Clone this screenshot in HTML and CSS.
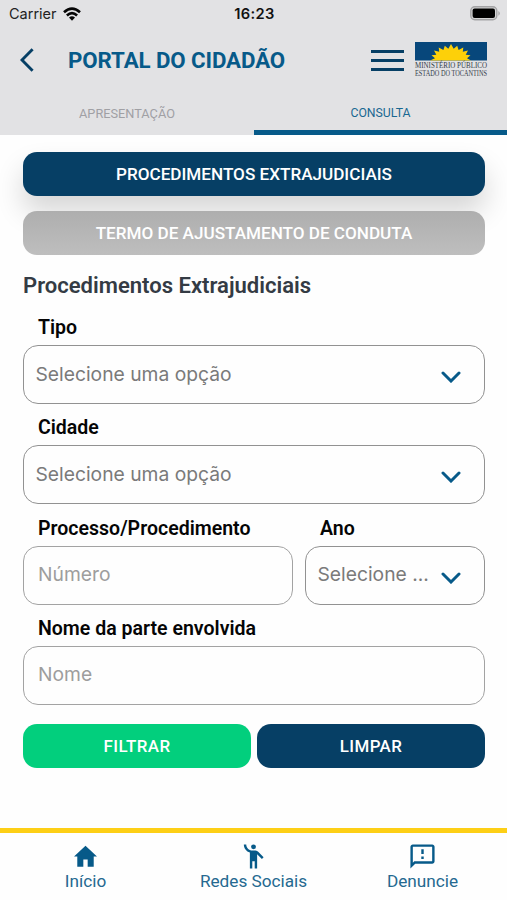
FILE: index.html
```html
<!DOCTYPE html>
<html lang="pt-BR">
<head>
<meta charset="utf-8">
<title>Portal do Cidadão</title>
<link rel="stylesheet" href="styles.css">
</head>
<body>
<header class="header">
  <div class="status">
    <div class="status-left">
      <span>Carrier</span>
      <svg class="wifi" viewBox="0 0 18 14"><g fill="none" stroke="#050505" stroke-width="2.7"><path d="M1 5.2Q9-1.8 17 5.2"/><path d="M3.9 8.4Q9 3.9 14.1 8.4"/></g><path d="M6 10.500Q9 8 12 10.500L9 13.700z" fill="#050505"/></svg>
    </div>
    <span class="clock">16:23</span>
    <svg class="battery" viewBox="0 0 30 15"><rect x=".8" y=".8" width="26" height="13" rx="4" fill="#d4d4d5" stroke="#a3a3a5" stroke-width="1.4"/><rect x="2.6" y="2.6" width="22.4" height="9.4" rx="2" fill="#000"/><path d="M28.4 5v4.8q1.4-.9 1.4-2.4T28.4 5z" fill="#a3a3a5"/></svg>
  </div>
  <div class="nav">
    <svg class="back" viewBox="0 0 14 24"><path d="M12.6 1.3 2 12l10.600 10.700" fill="none" stroke="#063f65" stroke-width="2.900"/></svg>
    <h1 class="title">PORTAL DO CIDADÃO</h1>
    <div class="burger"><i></i><i></i><i></i></div>
    <svg class="logo" viewBox="0 0 76 38">
      <rect x="1" y="0" width="72" height="18.500" fill="#07477b"/>
      <path d="M16 18.500l5-2.300-3.500-3 4.800-.4-2.300-4.300 5.200 1.300-.5-4.300 4.700 2.500 1.400-4.200 3.500 3L37 2l2.700 4.800 3.500-3 1.400 4.200 4.700-2.500-.5 4.300 5.200-1.300-2.300 4.300 4.800.4-3.500 3 4 2.300z" fill="#fdd009"/>
      <g class="logo-text"><text x="1" y="26.300" textLength="72" lengthAdjust="spacingAndGlyphs">MINISTÉRIO PÚBLICO</text><text x="1" y="33.800" textLength="72" lengthAdjust="spacingAndGlyphs">ESTADO DO TOCANTINS</text></g>
    </svg>
  </div>
  <nav class="tabs">
    <div class="tab">APRESENTAÇÃO</div>
    <div class="tab tab-active">CONSULTA</div>
  </nav>
</header>
<main class="main">
  <div class="modes">
    <button class="button navy raised">PROCEDIMENTOS EXTRAJUDICIAIS</button>
    <button class="button muted">TERMO DE AJUSTAMENTO DE CONDUTA</button>
  </div>
  <h2 class="heading">Procedimentos Extrajudiciais</h2>
  <div class="group"><label class="label">Tipo</label>
    <div class="field select"><span>Selecione uma opção</span><svg class="chev" viewBox="0 0 20 12"><path d="M2 2l8 8 8-8"/></svg></div></div>
  <div class="group"><label class="label">Cidade</label>
    <div class="field select"><span>Selecione uma opção</span><svg class="chev" viewBox="0 0 20 12"><path d="M2 2l8 8 8-8"/></svg></div></div>
  <div class="row">
    <div class="group"><label class="label">Processo/Procedimento</label><div class="field light"><span>Número</span></div></div>
    <div class="group"><label class="label">Ano</label>
      <div class="field select"><span>Selecione ...</span><svg class="chev" viewBox="0 0 20 12"><path d="M2 2l8 8 8-8"/></svg></div></div>
  </div>
  <div class="group"><label class="label">Nome da parte envolvida</label><div class="field light"><span>Nome</span></div></div>
  <div class="actions">
    <button class="button green">FILTRAR</button>
    <button class="button navy">LIMPAR</button>
  </div>
</main>
<footer class="footer">
  <a class="item"><svg viewBox="0 0 24 24"><path d="M10.200 20.500v-6h3.600v6h5v-8.500h2.700L12 3.200 2.500 12h2.700v8.500z"/></svg><span>Início</span></a>
  <a class="item"><svg viewBox="0 0 24 24"><circle cx="12" cy="4" r="2"/><path d="M15.890 8.110C15.500 7.720 14.830 7 13.530 7h-2.540C8.240 6.990 6 4.750 6 2H4c0 3.160 2.110 5.840 5 6.710V22h2v-6h2v6h2V10.050L18.950 14l1.410-1.410z"/></svg><span>Redes Sociais</span></a>
  <a class="item"><svg viewBox="0 0 24 24"><path d="M20 2H4c-1.100 0-1.990.9-1.990 2L2 22l4-4h14c1.100 0 2-.9 2-2V4c0-1.100-.9-2-2-2zm0 14H5.170L4 17.170V4h16zm-9-4h2v2h-2zm0-6h2v4h-2z"/></svg><span>Denuncie</span></a>
</footer>
</body>
</html>
```
FILE: styles.css
```css
* { box-sizing: border-box; }
body { margin: 0; width: 507px; height: 900px; background: #fefefe; font-family: Roboto, "Liberation Sans", sans-serif; display: flex; flex-direction: column; overflow: hidden; }
h1, h2 { margin: 0; }
.header { height: 135px; background: #e2e2e4; display: flex; flex-direction: column; flex: none; }
.status { height: 28px; display: grid; grid-template-columns: 1fr auto 1fr; align-items: center; padding: 0 7px 1px 9px; font-family: Inter, sans-serif; font-size: 14.500px; color: #222; }
.status-left { display: flex; align-items: center; gap: 6px; }
.wifi { width: 18px; height: 14px; }
.clock { font-weight: 600; font-size: 14.700px; color: #111; letter-spacing: .3px; }
.battery { width: 30px; height: 15px; justify-self: end; }
.nav { height: 64px; display: flex; align-items: center; padding: 0 17px 0 20px; }
.back { width: 14px; height: 24px; }
.title { margin-left: 34px; padding-bottom: 1px; font-size: 22.300px; line-height: 30px; font-weight: 700; color: #075a89; letter-spacing: -.1px; white-space: nowrap; }
.burger { margin-left: auto; width: 33px; display: flex; flex-direction: column; gap: 6px; }
.burger i { height: 3px; background: #063f65; }
.logo { width: 76px; height: 38px; margin: 2px 0 0 10px; }
.logo-text { font-family: "Liberation Serif", serif; font-size: 7.800px; fill: #333b48; }
.tabs { height: 43px; display: grid; grid-template-columns: 254px 1fr; }
.tab { display: flex; align-items: center; justify-content: center; font-size: 12.750px; color: #a0a0a4; }
.tab-active { color: #196791; border-bottom: 5px solid #075a89; padding-top: 4px; font-size: 12.250px; }
.main { padding: 17px 22px 0 23px; flex: none; }
.button { display: flex; align-items: center; justify-content: center; width: 100%; height: 44px; border: 0; border-radius: 14px; color: #fff; font: 500 17.120px Roboto, sans-serif; padding: 0; }
.modes { display: flex; flex-direction: column; gap: 15px; }
.navy { background: #063f65; }
.muted { background: linear-gradient(#aeaeae, #bebebe); position: relative; }
.raised { box-shadow: 0 16px 28px rgba(0, 0, 0, .16); }
.green { background: #02cf7d; }
.heading { margin-top: 16px; font-size: 22.050px; line-height: 29px; font-weight: 600; color: #343b44; }
.group { padding-top: 9px; height: 100.250px; min-width: 0; }
.heading + .group { margin-top: 4px; }
.label { display: block; padding-left: 15px; height: 29px; line-height: 30px; font-size: 19.550px; font-weight: 600; color: #050505; white-space: nowrap; }
.field { height: 59px; margin-top: 3px; border: 1.500px solid #929292; border-radius: 15px; padding: 0 23px 2px 11.500px; display: flex; align-items: center; justify-content: space-between; font: 400 19.250px Inter, sans-serif; color: #7a7a7a; white-space: nowrap; }
.light { color: #9d9d9d; padding-left: 14px; border-color: #a3a3a3; }
.chev { width: 20px; height: 12px; margin-top: 7px; fill: none; stroke: #075a89; stroke-width: 3; stroke-linecap: round; }
.row { display: grid; grid-template-columns: 270px 180px; gap: 12px; }
.actions { display: grid; grid-template-columns: 228px 228px; gap: 6px; margin-top: 19px; }
.actions .button { letter-spacing: .45px; font-size: 16.900px; padding-bottom: 1px; }
.footer { margin-top: auto; height: 72px; border-top: 5px solid #fdcf16; display: grid; grid-template-columns: repeat(3, 1fr); }
.item { display: flex; flex-direction: column; align-items: center; padding-top: 9px; color: #256990; font-size: 17.200px; }
.item:first-child { padding-left: 2px; }
.item svg { width: 29px; height: 29px; fill: #075a89; }
.item span { line-height: 22px; margin-top: -1px; }
```
